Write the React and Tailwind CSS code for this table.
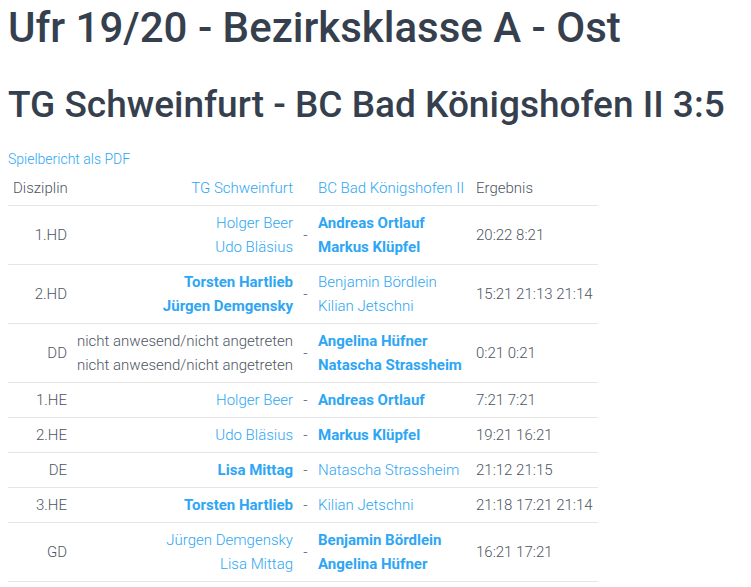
import React from "react";

const rows = [
  { d: "1.HD", home: ["Holger Beer", "Udo Bläsius"], away: ["Andreas Ortlauf", "Markus Klüpfel"], win: "away", res: "20:22 8:21" },
  { d: "2.HD", home: ["Torsten Hartlieb", "Jürgen Demgensky"], away: ["Benjamin Bördlein", "Kilian Jetschni"], win: "home", res: "15:21 21:13 21:14" },
  { d: "DD", home: ["nicht anwesend/nicht angetreten", "nicht anwesend/nicht angetreten"], away: ["Angelina Hüfner", "Natascha Strassheim"], win: "away", res: "0:21 0:21", absent: true },
  { d: "1.HE", home: ["Holger Beer"], away: ["Andreas Ortlauf"], win: "away", res: "7:21 7:21" },
  { d: "2.HE", home: ["Udo Bläsius"], away: ["Markus Klüpfel"], win: "away", res: "19:21 16:21" },
  { d: "DE", home: ["Lisa Mittag"], away: ["Natascha Strassheim"], win: "home", res: "21:12 21:15" },
  { d: "3.HE", home: ["Torsten Hartlieb"], away: ["Kilian Jetschni"], win: "home", res: "21:18 17:21 21:14" },
  { d: "GD", home: ["Jürgen Demgensky", "Lisa Mittag"], away: ["Benjamin Bördlein", "Angelina Hüfner"], win: "away", res: "16:21 17:21" },
];

function Names({ names, bold, absent }) {
  return names.map((n, i) => (
    <div key={i} className={absent ? "text-[#4d5562]" : bold ? "font-bold text-[#2ea6f4]" : "text-[#2ea6f4]"}>
      {n}
    </div>
  ));
}

export default function App() {
  return (
    <div className="px-2 font-['Roboto',sans-serif] font-light text-[15px] leading-[24px] text-[#4d5562]">
      <h1 className="mt-[3px] text-[42px] leading-[50px] font-medium text-[#363f4e]">
        Ufr 19/20 - Bezirksklasse A - Ost
      </h1>
      <h2 className="mt-[30px] text-[37px] leading-[44px] font-medium text-[#363f4e]">
        TG Schweinfurt - BC Bad Königshofen II 3:5
      </h2>
      <p className="mt-[20px]">
        <a className="text-[14px] text-[#2ea6f4]">Spielbericht als PDF</a>
      </p>
      <table className="w-[590px] table-fixed border-collapse">
        <colgroup>
          <col className="w-[64px]" />
          <col className="w-[226px]" />
          <col className="w-[15px]" />
          <col className="w-[158px]" />
          <col className="w-[127px]" />
        </colgroup>
        <thead>
          <tr className="border-b border-[#e6e6e6]">
            <th className="px-[5px] py-[5px] text-left font-light">Disziplin</th>
            <th className="px-[5px] py-[5px] text-right font-light text-[#2ea6f4]">TG Schweinfurt</th>
            <th className="py-[5px]"></th>
            <th className="px-[5px] py-[5px] text-left font-light text-[#2ea6f4] whitespace-nowrap">BC Bad Königshofen II</th>
            <th className="px-[5px] py-[5px] text-left font-light">Ergebnis</th>
          </tr>
        </thead>
        <tbody>
          {rows.map((r) => (
            <tr key={r.d} className="border-b border-[#e6e6e6]">
              <td className="px-[5px] py-[5px] text-right align-middle">{r.d}</td>
              <td className="px-[5px] py-[5px] text-right align-middle whitespace-nowrap">
                <Names names={r.home} bold={r.win === "home"} absent={r.absent} />
              </td>
              <td className="py-[5px] text-center align-middle">-</td>
              <td className="px-[5px] py-[5px] text-left align-middle whitespace-nowrap">
                <Names names={r.away} bold={r.win === "away"} />
              </td>
              <td className="px-[5px] py-[5px] text-left align-middle whitespace-nowrap">{r.res}</td>
            </tr>
          ))}
        </tbody>
      </table>
    </div>
  );
}
